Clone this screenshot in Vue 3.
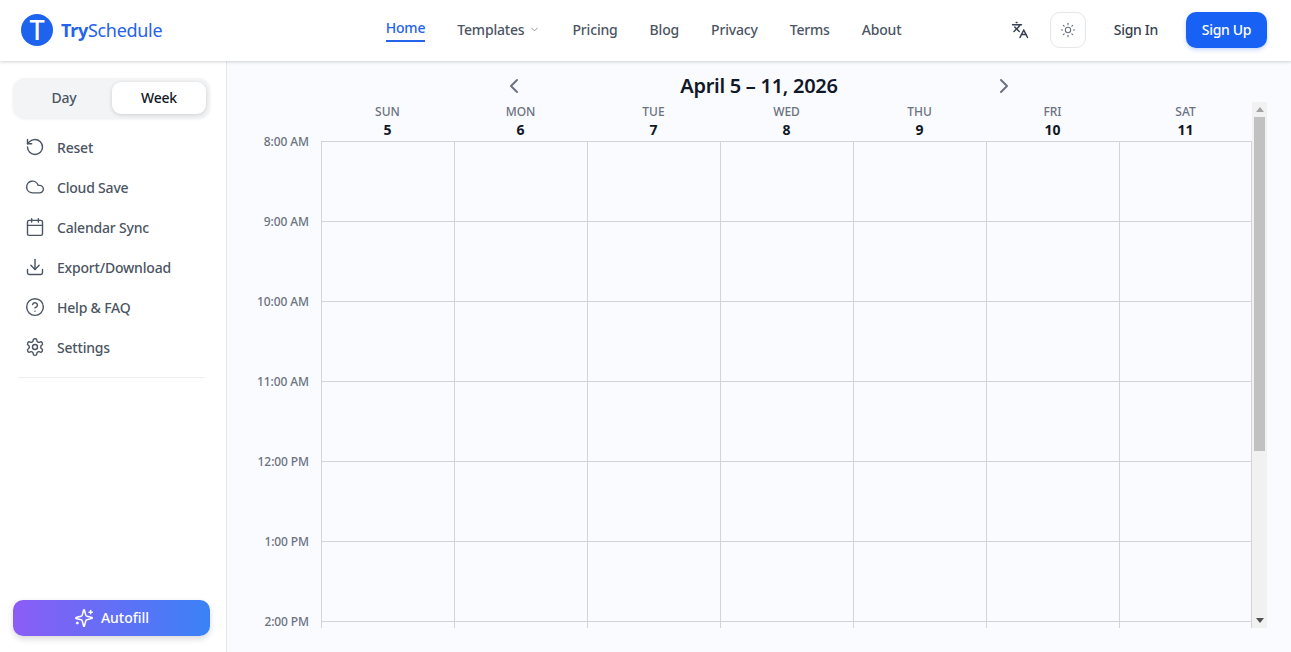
<script setup>
const navLinks = ['Pricing', 'Blog', 'Privacy', 'Terms', 'About']

const sideItems = [
  { label: 'Reset', paths: ['M3 12a9 9 0 1 0 9-9 9.75 9.75 0 0 0-6.74 2.74L3 8', 'M3 3v5h5'] },
  { label: 'Cloud Save', paths: ['M17.5 19H9a7 7 0 1 1 6.71-9h1.79a4.5 4.5 0 1 1 0 9Z'] },
  { label: 'Calendar Sync', paths: ['M8 2v4', 'M16 2v4', 'M5 4h14a2 2 0 0 1 2 2v14a2 2 0 0 1-2 2H5a2 2 0 0 1-2-2V6a2 2 0 0 1 2-2Z', 'M3 10h18'] },
  { label: 'Export/Download', paths: ['M21 15v4a2 2 0 0 1-2 2H5a2 2 0 0 1-2-2v-4', 'M7 10l5 5 5-5', 'M12 15V3'] },
  { label: 'Help & FAQ', paths: ['M22 12a10 10 0 1 1-20 0 10 10 0 0 1 20 0Z', 'M9.09 9a3 3 0 0 1 5.83 1c0 2-3 3-3 3', 'M12 17h.01'] },
  { label: 'Settings', paths: ['M12.22 2h-.44a2 2 0 0 0-2 2v.18a2 2 0 0 1-1 1.73l-.43.25a2 2 0 0 1-2 0l-.15-.08a2 2 0 0 0-2.73.73l-.22.38a2 2 0 0 0 .73 2.73l.15.1a2 2 0 0 1 1 1.72v.51a2 2 0 0 1-1 1.74l-.15.09a2 2 0 0 0-.73 2.73l.22.38a2 2 0 0 0 2.73.73l.15-.08a2 2 0 0 1 2 0l.43.25a2 2 0 0 1 1 1.73V20a2 2 0 0 0 2 2h.44a2 2 0 0 0 2-2v-.18a2 2 0 0 1 1-1.73l.43-.25a2 2 0 0 1 2 0l.15.08a2 2 0 0 0 2.73-.73l.22-.39a2 2 0 0 0-.73-2.73l-.15-.08a2 2 0 0 1-1-1.74v-.5a2 2 0 0 1 1-1.74l.15-.09a2 2 0 0 0 .73-2.73l-.22-.38a2 2 0 0 0-2.73-.73l-.15.08a2 2 0 0 1-2 0l-.43-.25a2 2 0 0 1-1-1.73V4a2 2 0 0 0-2-2z', 'M15 12a3 3 0 1 1-6 0 3 3 0 0 1 6 0Z'] },
]

const days = [
  { name: 'SUN', date: 5 },
  { name: 'MON', date: 6 },
  { name: 'TUE', date: 7 },
  { name: 'WED', date: 8 },
  { name: 'THU', date: 9 },
  { name: 'FRI', date: 10 },
  { name: 'SAT', date: 11 },
]

const hours = ['8:00 AM', '9:00 AM', '10:00 AM', '11:00 AM', '12:00 PM', '1:00 PM', '2:00 PM']
</script>

<template>
  <div class="page">
    <header class="topbar">
      <div class="brand">
        <span class="logo">T</span>
        <span class="brand-name"><b>Try</b>Schedule</span>
      </div>
      <nav class="nav">
        <a class="nav-link active">Home</a>
        <a class="nav-link">
          Templates
          <svg class="caret" viewBox="0 0 24 24"><path d="m6 9 6 6 6-6" /></svg>
        </a>
        <a v-for="link in navLinks" :key="link" class="nav-link">{{ link }}</a>
      </nav>
      <div class="actions">
        <svg class="lang" viewBox="0 0 24 24">
          <path d="m5 8 6 6" /><path d="m4 14 6-6 2-3" /><path d="M2 5h12" /><path d="M7 2h1" />
          <path d="m22 22-5-10-5 10" /><path d="M14 18h6" />
        </svg>
        <button class="theme" type="button">
          <svg viewBox="0 0 24 24">
            <path d="M16 12a4 4 0 1 1-8 0 4 4 0 0 1 8 0Z" />
            <path d="M12 2v2" /><path d="M12 20v2" /><path d="m4.93 4.93 1.41 1.41" /><path d="m17.66 17.66 1.41 1.41" />
            <path d="M2 12h2" /><path d="M20 12h2" /><path d="m6.34 17.66-1.41 1.41" /><path d="m19.07 4.93-1.41 1.41" />
          </svg>
        </button>
        <a class="sign-in">Sign In</a>
        <button class="sign-up" type="button">Sign Up</button>
      </div>
    </header>

    <div class="body">
      <aside class="sidebar">
        <div class="toggle">
          <button class="toggle-btn" type="button">Day</button>
          <button class="toggle-btn on" type="button">Week</button>
        </div>
        <ul class="side-list">
          <li v-for="item in sideItems" :key="item.label" class="side-item">
            <svg viewBox="0 0 24 24"><path v-for="d in item.paths" :key="d" :d="d" /></svg>
            {{ item.label }}
          </li>
        </ul>
        <div class="divider"></div>
        <button class="autofill" type="button">
          <svg viewBox="0 0 24 24">
            <path d="M9.937 15.5A2 2 0 0 0 8.5 14.063l-6.135-1.582a.5.5 0 0 1 0-.962L8.5 9.936A2 2 0 0 0 9.937 8.5l1.582-6.135a.5.5 0 0 1 .963 0L14.063 8.5A2 2 0 0 0 15.5 9.937l6.135 1.581a.5.5 0 0 1 0 .964L15.5 14.063a2 2 0 0 0-1.437 1.437l-1.582 6.135a.5.5 0 0 1-.963 0z" />
            <path d="M20 3v4" /><path d="M22 5h-4" /><path d="M4 17v2" /><path d="M5 18H3" />
          </svg>
          Autofill
        </button>
      </aside>

      <main class="main">
        <div class="week-bar">
          <svg viewBox="0 0 24 24"><path d="m15 18-6-6 6-6" /></svg>
          <h1 class="week-title">April 5 – 11, 2026</h1>
          <svg viewBox="0 0 24 24"><path d="m9 18 6-6-6-6" /></svg>
        </div>
        <div class="calendar">
          <div class="grid">
            <div class="day-head">
              <div v-for="day in days" :key="day.name" class="day">
                <span class="day-name">{{ day.name }}</span>
                <span class="day-date">{{ day.date }}</span>
              </div>
            </div>
            <div v-for="hour in hours" :key="hour" class="row">
              <span class="hour">{{ hour }}</span>
              <div v-for="day in days" :key="day.name" class="cell"></div>
            </div>
          </div>
          <div class="scrollbar">
            <span class="sb-btn"><i class="arrow-up"></i></span>
            <span class="sb-track"><i class="sb-thumb"></i></span>
            <span class="sb-btn"><i class="arrow-down"></i></span>
          </div>
        </div>
      </main>
    </div>
  </div>
</template>

<style>
html,
body {
  margin: 0;
  height: 100%;
  overflow: hidden;
}
</style>

<style scoped>
.page {
  height: 652px;
  display: flex;
  flex-direction: column;
  font-family: 'Noto Sans', 'Open Sans', sans-serif;
  color: #4b5563;
  background: #fafbfe;
}

svg {
  fill: none;
  stroke: currentColor;
  stroke-width: 2;
  stroke-linecap: round;
  stroke-linejoin: round;
  flex-shrink: 0;
}

button {
  font-family: inherit;
  border: none;
  cursor: pointer;
}

.topbar {
  height: 61px;
  box-sizing: border-box;
  flex-shrink: 0;
  display: grid;
  grid-template-columns: 1fr auto 1fr;
  align-items: center;
  padding: 0 24px 1px 21px;
  background: #fff;
  box-shadow: 0 1px 3px rgba(0, 0, 0, 0.18);
  position: relative;
  z-index: 2;
}

.brand {
  display: flex;
  align-items: center;
  gap: 8px;
}

.logo {
  width: 32px;
  height: 32px;
  border-radius: 50%;
  background: #1d63ed;
  color: #fff;
  font-size: 27px;
  font-weight: 500;
  line-height: 31px;
  text-align: center;
}

.brand-name {
  font-size: 18px;
  letter-spacing: -0.3px;
  color: #2563eb;
  margin-top: -1px;
}

.brand-name b {
  font-weight: 700;
}

.nav {
  display: flex;
  align-items: center;
  gap: 32px;
  margin-left: -1px;
}

.nav-link {
  display: flex;
  align-items: center;
  gap: 5px;
  font-size: 14px;
  font-weight: 500;
  line-height: 20px;
  letter-spacing: -0.18px;
  white-space: nowrap;
  margin-top: -1px;
}

.nav-link.active {
  color: #2563eb;
  padding-bottom: 2px;
  border-bottom: 2px solid #2563eb;
  margin-top: 0;
}

.caret {
  width: 11px;
  height: 11px;
  stroke-width: 1.6;
  color: #6b7280;
}

.actions {
  display: flex;
  align-items: center;
  justify-content: flex-end;
}

.lang {
  width: 18px;
  height: 18px;
  color: #374151;
  margin-right: 21px;
}

.theme {
  width: 36px;
  height: 36px;
  display: flex;
  align-items: center;
  justify-content: center;
  padding: 0;
  background: #fff;
  color: #6b7280;
  border: 1px solid #e5e7eb;
  border-radius: 10px;
  margin-right: 28px;
}

.theme svg {
  width: 16px;
  height: 16px;
  stroke-width: 1.6;
}

.sign-in {
  font-size: 14px;
  font-weight: 500;
  letter-spacing: -0.3px;
  color: #374151;
  margin-right: 28px;
  margin-top: -2px;
}

.sign-up {
  width: 81px;
  height: 36px;
  padding: 0 0 2px;
  border-radius: 10px;
  background: #1761f5;
  color: #fff;
  font-size: 14px;
  font-weight: 500;
  letter-spacing: -0.3px;
  box-shadow: 0 2px 4px rgba(37, 99, 235, 0.25);
}

.body {
  flex: 1;
  min-height: 0;
  display: flex;
}

.sidebar {
  width: 227px;
  flex-shrink: 0;
  box-sizing: border-box;
  display: flex;
  flex-direction: column;
  padding: 17px 16px 16px 13px;
  background: #fff;
  border-right: 1px solid #e5e7eb;
}

.toggle {
  height: 40px;
  box-sizing: border-box;
  display: flex;
  padding: 4px;
  gap: 1px;
  border-radius: 12px;
  background: #f3f4f6;
  box-shadow: 0 1px 3px rgba(0, 0, 0, 0.08);
}

.toggle-btn {
  flex: 1;
  padding: 0 0 2px;
  border-radius: 9px;
  background: transparent;
  color: #4b5563;
  font-size: 14px;
  font-weight: 500;
  letter-spacing: -0.2px;
}

.toggle-btn.on {
  background: #fff;
  color: #111827;
  box-shadow: 0 1px 4px rgba(0, 0, 0, 0.16);
}

.side-list {
  list-style: none;
  margin: 9px 0 0;
  padding: 0;
}

.side-item {
  height: 40px;
  display: flex;
  align-items: center;
  gap: 12px;
  padding-left: 12px;
  font-size: 14px;
  font-weight: 500;
  letter-spacing: -0.2px;
}

.side-item svg {
  width: 20px;
  height: 20px;
  stroke-width: 1.7;
}

.divider {
  height: 1px;
  margin: 10px 5px 0;
  background: #eceef1;
}

.autofill {
  height: 36px;
  margin-top: auto;
  padding: 0 0 1px;
  display: flex;
  align-items: center;
  justify-content: center;
  gap: 7px;
  border-radius: 10px;
  background: linear-gradient(90deg, #8b5cf6, #3b82f6);
  color: #fff;
  font-size: 14px;
  font-weight: 500;
  box-shadow: 0 3px 6px rgba(0, 0, 0, 0.15);
}

.autofill svg {
  width: 20px;
  height: 20px;
  stroke-width: 1.8;
}

.main {
  flex: 1;
  min-width: 0;
  display: flex;
  flex-direction: column;
  padding: 9px 24px 24px;
}

.week-bar {
  height: 32px;
  flex-shrink: 0;
  display: flex;
  align-items: center;
  justify-content: center;
  color: #6b7280;
}

.week-bar svg {
  width: 24px;
  height: 24px;
}

.week-title {
  width: 466px;
  margin: 0 0 2px;
  text-align: center;
  font-size: 20px;
  font-weight: 600;
  letter-spacing: -0.28px;
  color: #111827;
}

.calendar {
  flex: 1;
  min-height: 0;
  display: flex;
}

.grid {
  flex: 1;
  min-width: 0;
}

.day-head {
  height: 39px;
  display: flex;
  padding-left: 70px;
}

.day {
  width: 133px;
  display: flex;
  flex-direction: column;
  align-items: center;
  justify-content: flex-end;
  padding-bottom: 2px;
}

.day-name {
  font-size: 12px;
  font-weight: 500;
  line-height: 18px;
  color: #6b7280;
}

.day-date {
  font-size: 14px;
  font-weight: 700;
  line-height: 18px;
  color: #111827;
}

.row {
  height: 80px;
  display: flex;
}

/* only the start of the 2 PM row is in view */
.row:last-child {
  height: 7px;
}

.hour {
  width: 58px;
  height: 12px;
  margin-right: 12px;
  text-align: right;
  font-size: 12px;
  line-height: 12px;
  font-weight: 500;
  letter-spacing: -0.1px;
  color: #6b7280;
  flex-shrink: 0;
  transform: translateY(-5px);
}

.cell {
  width: 133px;
  box-sizing: border-box;
  border-top: 1px solid #d1d5db;
  border-left: 1px solid #d1d5db;
}

.cell:last-child {
  border-right: 1px solid #d1d5db;
}

.scrollbar {
  width: 15px;
  flex-shrink: 0;
  display: flex;
  flex-direction: column;
  background: #f1f1f1;
}

.sb-btn {
  height: 15px;
  display: flex;
  align-items: center;
  justify-content: center;
}

.arrow-up {
  border: 4px solid transparent;
  border-top: 0;
  border-bottom: 5px solid #a3a3a3;
}

.arrow-down {
  border: 4px solid transparent;
  border-bottom: 0;
  border-top: 5px solid #505050;
}

.sb-track {
  flex: 1;
  padding: 0 2px;
}

.sb-thumb {
  display: block;
  height: 334px;
  background: #c1c1c1;
}
</style>
